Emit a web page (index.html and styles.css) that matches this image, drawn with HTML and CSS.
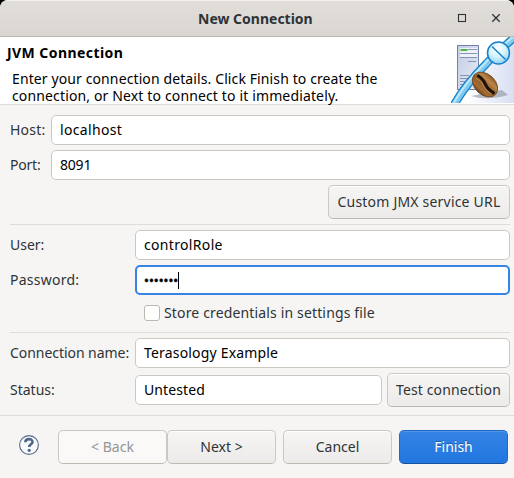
FILE: index.html
```
<!DOCTYPE html>
<html lang="en">
<head>
<meta charset="utf-8">
<title>New Connection</title>
<link rel="stylesheet" href="styles.css">
</head>
<body>
<div class="window">
  <header class="titlebar">
    <span class="title">New Connection</span>
    <svg class="winbtn" width="12" height="12" viewBox="0 0 12 12"><rect x="2.500" y="2.500" width="7" height="7" fill="none" stroke="#2d3339" stroke-width="1.100"/></svg>
    <svg class="winbtn" width="12" height="12" viewBox="0 0 12 12"><path d="M2.300 2.300l7.400 7.400M9.700 2.300L2.300 9.700" stroke="#2d3339" stroke-width="1.300"/></svg>
  </header>
  <section class="banner">
    <div class="intro">
      <h1>JVM Connection</h1>
      <p><span class="t-intro1">Enter your connection details. Click Finish to create the</span><br><span class="t-intro2">connection, or Next to connect to it immediately.</span></p>
    </div>
    <svg class="art" width="64" height="66" viewBox="0 0 64 66">
      <defs>
        <linearGradient id="sky" x1="0" y1="0" x2="1" y2="0"><stop offset=".2" stop-color="#fff"/><stop offset=".75" stop-color="#e3e8f6"/><stop offset="1" stop-color="#d8dff2"/></linearGradient>
        <linearGradient id="case" x1="0" y1="0" x2="1" y2="1"><stop offset="0" stop-color="#c3cde4"/><stop offset="1" stop-color="#e6eaf4"/></linearGradient>
        <radialGradient id="ball" cx=".45" cy=".3" r=".75"><stop offset="0" stop-color="#fff"/><stop offset=".5" stop-color="#d5f3fd"/><stop offset="1" stop-color="#84cef2"/></radialGradient>
        <linearGradient id="bean" x1="0" y1="0" x2="0" y2="1"><stop offset="0" stop-color="#8f5a28"/><stop offset=".25" stop-color="#bd8647"/><stop offset=".55" stop-color="#8f5b2a"/><stop offset=".8" stop-color="#a56c34"/><stop offset="1" stop-color="#6b3f1c"/></linearGradient>
      </defs>
      <path d="M4 66C18 38 38 16 64 2V66Z" fill="url(#sky)"/>
      <rect x="6.500" y="8.500" width="21" height="44" fill="url(#case)" stroke="#7582a8"/>
      <path d="M9 11h17v9H9z" fill="#eef1f8"/>
      <path d="M9.500 13h7" stroke="#4fb749" stroke-width="2"/>
      <path d="M17 12.500h9M9 16.500h17M9 20.500h17M17 24.500h8M9 38.500h9M9 41.500h8M9 44.500h7M9 47.500h6M9 50.500h4" stroke="#8795b5"/>
      <path d="M20 59q16 5 37-1l-6-5z" fill="#858b98" opacity=".55"/>
      <path d="M3 68C12 52 20 42 35 27C45 16 55 8 66 -2" fill="none" stroke="#1b84c8" stroke-width="8.400"/>
      <path d="M3 68C12 52 20 42 35 27C45 16 55 8 66 -2" fill="none" stroke="#7fcaf1" stroke-width="5.800"/>
      <path d="M2 67C11 51 19 41 34 26C44 15 54 7 65 -3" fill="none" stroke="#bee8fb" stroke-width="2"/>
      <circle cx="47.500" cy="16" r="11" fill="url(#ball)" stroke="#1880c8" stroke-width="1.500"/>
      <path d="M41 9.500L54.500 22.500" stroke="#1880c8" stroke-width="1.500"/>
      <g transform="translate(34 47.500) rotate(43)"><ellipse rx="14.500" ry="10.300" fill="url(#bean)" stroke="#6c431f" stroke-width=".8"/><path d="M-12-1.500Q-5-3 0-.5T13 0" fill="none" stroke="#1c120a" stroke-width="3"/><path d="M-11 1.500Q-5 0 0 2T11 2.500" fill="none" stroke="#c48d51" stroke-width=".9"/></g>
    </svg>
  </section>
  <main>
    <div class="row endpoint"><label class="t-host">Host:</label><div class="field t-wide">localhost</div></div>
    <div class="row endpoint"><label class="t-port">Port:</label><div class="field t-digits">8091</div></div>
    <div class="row right"><div class="button custom t-custom">Custom JMX service URL</div></div>
    <div class="separator"></div>
    <div class="row"><label>User:</label><div class="field t-wide">controlRole</div></div>
    <div class="row"><label class="t-password">Password:</label><div class="field focused"><span class="dots">•••••••</span><i class="caret"></i></div></div>
    <div class="check"><span class="box"></span><span class="t-store">Store credentials in settings file</span></div>
    <div class="separator"></div>
    <div class="row"><label class="t-name">Connection name:</label><div class="field t-example">Terasology Example</div></div>
    <div class="row status"><label>Status:</label><div class="field t-untested">Untested</div><div class="button test">Test connection</div></div>
  </main>
  <footer>
    <svg class="help" width="22" height="22" viewBox="0 0 22 22"><circle cx="11" cy="11" r="9.400" fill="#fafafa" stroke="#536b8b" stroke-width="1.100"/><path d="M7.300 8.200C7.400 4.200 14.500 4 14.500 7.900C14.500 10.300 11.200 10.400 11.200 13" fill="none" stroke="#4d678a" stroke-width="2.600"/><circle cx="11.200" cy="16.300" r="1.600" fill="#4d678a"/></svg>
    <div class="button disabled">&lt; Back</div>
    <div class="button">Next &gt;</div>
    <div class="button cancel">Cancel</div>
    <div class="button primary">Finish</div>
  </footer>
</div>
</body>
</html>
```
FILE: styles.css
```
* { box-sizing: border-box; }
body { margin: 0; background: #000; font: 14px/20px "Noto Sans", sans-serif; color: #2e3436; }
.window { width: 514px; height: 478px; overflow: hidden; background: #f6f5f4; border-radius: 8px 8px 0 0; }
.titlebar { height: 37px; display: flex; align-items: center; padding: 0 12px 0 198px; background: linear-gradient(#e1deda, #dad6d2); border-top: 1px solid #f4f2f0; border-bottom: 1px solid #bfb8b1; font-weight: 700; }
.title { flex: 1; white-space: nowrap; }
.winbtn { margin: -2px 0 0 22px; }
.banner { height: 68px; display: flex; background: #fff; color: #000; border-bottom: 1px solid #dfddd5; }
.intro { flex: 1; white-space: nowrap; padding: 6px 0 0 7px; }
h1 { margin: 0; font-size: 14px; line-height: 20px; letter-spacing: .43px; }
p { margin: 7px 0 0 5px; line-height: 17px; }
.art { margin-right: -1px; }
main { padding: 10px 4px 0 10px; display: flex; flex-direction: column; gap: 5px; }
.row { display: grid; grid-template-columns: 125px 1fr; align-items: center; }
.row.endpoint { grid-template-columns: 41px 1fr; }
.row.right { display: flex; justify-content: flex-end; }
.row.status { grid-template-columns: 125px 247px 1fr; }
.row.status .button { margin-left: 5px; width: 123px; }
label, .field, .button, .check { white-space: nowrap; }
.field { height: 30px; border: 1px solid #cdc7c2; border-radius: 5px; background: #fff; color: #000; padding: 0 8px; display: flex; align-items: center; }
.field.focused { border: 2px solid #3584e4; padding: 0 7px; }
.dots { font-size: 13px; -webkit-text-stroke: .5px #000; }
.caret { width: 1px; height: 17px; background: #000; }
.button { height: 34px; width: 109px; display: flex; align-items: center; justify-content: center; border: 1px solid #cdc7c2; border-bottom-color: #bfb8b1; border-radius: 5px; background: linear-gradient(#f6f5f4, #edebe9); box-shadow: inset 0 1px #fff; }
.button.custom { width: 182px; }
.button.test { letter-spacing: .13px; }
.separator { height: 1px; background: #dfddd5; }
.check { height: 27px; margin-left: 134px; padding-bottom: 1px; display: flex; align-items: center; gap: 4px; }
.box { width: 16px; height: 16px; border: 1px solid #bfb8b1; border-radius: 3px; background: #fff; }
footer { margin-top: 8px; height: 63px; border-top: 1px solid #dfddd5; display: flex; padding: 14px 0 0 18px; }
.help { margin: 4px 18px 0 0; }
.button.disabled { background: #faf9f8; color: #929595; box-shadow: none; }
.cancel { margin-left: 7px; }
.button.primary { margin-left: 7px; color: #fff; background: linear-gradient(#3584e4, #2176e0); border-color: #1b6acb; border-bottom-color: #15539e; box-shadow: inset 0 1px #5396e8; text-shadow: 0 -1px #1a5bab; }
.t-intro1 { letter-spacing: .11px; }
.t-intro2 { letter-spacing: .14px; }
.t-host { letter-spacing: .2px; }
.t-port { letter-spacing: -.2px; }
.t-wide { letter-spacing: .33px; }
.t-digits { letter-spacing: -.2px; }
.t-custom { letter-spacing: .2px; }
.t-password { letter-spacing: .25px; }
.t-store { letter-spacing: .15px; }
.t-name { letter-spacing: -.05px; }
.t-example { letter-spacing: .18px; }
.t-untested { letter-spacing: .1px; }
```
